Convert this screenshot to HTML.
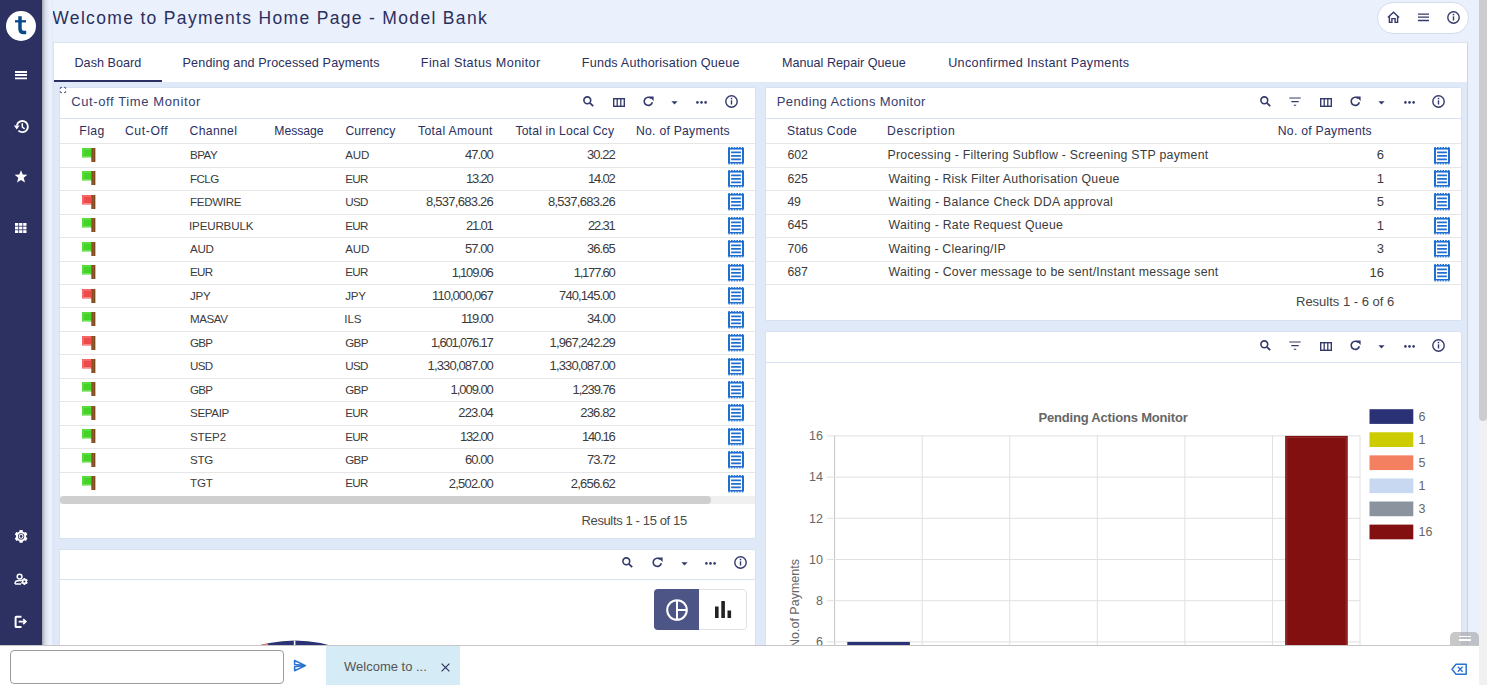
<!DOCTYPE html><html><head><meta charset="utf-8"><style>
*{box-sizing:border-box;margin:0;padding:0}
html,body{width:1487px;height:685px;overflow:hidden;background:#eaf1fc;font-family:"Liberation Sans",sans-serif;color:#333}
div{position:absolute;white-space:nowrap}
svg{position:absolute;overflow:visible}
.p{background:#fff;border:1px solid #d6e1f4;border-radius:2px}
.t{font-size:13px;line-height:15px}
.nv{color:#2b2f5e}
.dk{color:#3b3b3b}
.rl{height:1px;background:#e6e6e6}
</style></head><body><div style="left:1479px;top:0;width:8px;height:685px;background:#f1f1f1"></div><div style="left:1479px;top:0;width:8px;height:421px;background:#cdcdcd;border-radius:0 0 4px 4px"></div><div class="t nv" style="left:52.30px;top:10.64px;font-size:17.5px;letter-spacing:1.328px;">Welcome to Payments Home Page - Model Bank</div><div style="left:1377px;top:2px;width:92px;height:32px;border:1px solid #d3ddef;border-radius:16px;background:#fff"></div><svg style="left:1387px;top:11px" width="13" height="13" viewBox="0 0 13 13"><path d="M0.9 6.6 L6.5 1.3 L12.1 6.6" fill="none" stroke="#343a6b" stroke-width="1.4"/><path d="M2.4 5.3 V11.4 H4.9 V7.6 H8.1 V11.4 H10.6 V5.3" fill="none" stroke="#343a6b" stroke-width="1.4"/></svg><svg style="left:1417px;top:13px" width="13" height="9" viewBox="0 0 13 9"><path d="M1 1.1H12M1 4.1H12M1 7.5H12" stroke="#343a6b" stroke-width="1.4"/></svg><svg style="left:1447px;top:11px" width="13" height="13" viewBox="0 0 13 13"><circle cx="6.5" cy="6.5" r="5.7" fill="none" stroke="#343a6b" stroke-width="1.4"/><rect x="5.8" y="5.3" width="1.4" height="4.2" fill="#343a6b"/><rect x="5.75" y="2.8" width="1.5" height="1.5" fill="#343a6b"/></svg><div style="left:54px;top:42px;width:1414px;height:603px;background:#dfe9f8;border-top:1px solid #dce4f1;border-right:1px solid #cbd3e8"></div><div style="left:54px;top:43px;width:1413px;height:39px;background:#fff"></div><div class="t nv" style="left:74.50px;top:56.43px;font-size:12.6px;letter-spacing:0.022px;">Dash Board</div><div class="t nv" style="left:182.60px;top:56.43px;font-size:12.6px;letter-spacing:0.127px;">Pending and Processed Payments</div><div class="t nv" style="left:420.80px;top:56.43px;font-size:12.6px;letter-spacing:0.390px;">Final Status Monitor</div><div class="t nv" style="left:581.80px;top:56.43px;font-size:12.6px;letter-spacing:0.212px;">Funds Authorisation Queue</div><div class="t nv" style="left:781.90px;top:56.43px;font-size:12.6px;letter-spacing:0.033px;">Manual Repair Queue</div><div class="t nv" style="left:948.20px;top:56.43px;font-size:12.6px;letter-spacing:0.322px;">Unconfirmed Instant Payments</div><div style="left:54px;top:80px;width:108px;height:2px;background:#2b2f62"></div><div class="p" style="left:59px;top:87px;width:697px;height:452px"></div><svg style="left:60.2px;top:87.3px" width="6" height="6" viewBox="0 0 6 6"><path d="M0.4 2V0.4H2M4 0.4H5.6V2M5.6 4V5.6H4M2 5.6H0.4V4" fill="none" stroke="#3a4080" stroke-width="0.8"/></svg><div class="t" style="left:71.30px;top:93.90px;font-size:13px;letter-spacing:0.604px;color:#36406f">Cut-off Time Monitor</div><div style="left:60px;top:118px;width:695px;height:1px;background:#d8e2f4"></div><svg style="left:583px;top:96px" width="11" height="11" viewBox="0 0 11 11"><circle cx="4.3" cy="4.3" r="3.4" fill="none" stroke="#343a6b" stroke-width="1.6"/><path d="M6.8 6.8 L10.2 10.2" stroke="#343a6b" stroke-width="1.8"/></svg><svg style="left:613px;top:98px" width="12" height="9" viewBox="0 0 12 9"><rect x="0.7" y="0.7" width="10.6" height="7.6" fill="none" stroke="#343a6b" stroke-width="1.4"/><path d="M4.2 0.7V8.3M7.8 0.7V8.3" stroke="#343a6b" stroke-width="1.3"/></svg><svg style="left:643px;top:96px" width="11" height="11" viewBox="0 0 11 11"><path d="M9.3 6.2 A4.1 4.1 0 1 1 8.2 2.4" fill="none" stroke="#343a6b" stroke-width="1.6"/><path d="M6.2 0.6 L10.6 0.6 L10.6 5 Z" fill="#343a6b"/></svg><svg style="left:671px;top:101px" width="7" height="4" viewBox="0 0 7 4"><path d="M0.4 0.2H6.6L3.5 3.6Z" fill="#343a6b"/></svg><svg style="left:696px;top:101px" width="11" height="3" viewBox="0 0 11 3"><circle cx="1.4" cy="1.4" r="1.3" fill="#343a6b"/><circle cx="5.5" cy="1.4" r="1.3" fill="#343a6b"/><circle cx="9.6" cy="1.4" r="1.3" fill="#343a6b"/></svg><svg style="left:725px;top:95px" width="13" height="13" viewBox="0 0 13 13"><circle cx="6.5" cy="6.5" r="5.7" fill="none" stroke="#343a6b" stroke-width="1.4"/><rect x="5.8" y="5.3" width="1.4" height="4.2" fill="#343a6b"/><rect x="5.75" y="2.8" width="1.5" height="1.5" fill="#343a6b"/></svg><div class="t nv" style="left:79.30px;top:124.37px;font-size:12.2px;letter-spacing:0.457px;">Flag</div><div class="t nv" style="left:124.90px;top:124.37px;font-size:12.2px;letter-spacing:0.622px;">Cut-Off</div><div class="t nv" style="left:189.60px;top:124.37px;font-size:12.2px;letter-spacing:0.318px;">Channel</div><div class="t nv" style="left:274.30px;top:124.37px;font-size:12.2px;letter-spacing:-0.029px;">Message</div><div class="t nv" style="left:345.50px;top:124.37px;font-size:12.2px;letter-spacing:0.050px;">Currency</div><div class="t nv" style="left:418.00px;top:124.37px;font-size:12.2px;letter-spacing:0.360px;">Total Amount</div><div class="t nv" style="left:515.40px;top:124.37px;font-size:12.2px;letter-spacing:0.181px;">Total in Local Ccy</div><div class="t nv" style="left:636.00px;top:124.37px;font-size:12.2px;letter-spacing:0.257px;">No. of Payments</div><div class="rl" style="left:60px;top:143.30px;width:695px"></div><div class="t dk" style="left:190.00px;top:147.18px;font-size:11.6px;letter-spacing:-0.500px;">BPAY</div><div class="t dk" style="left:345.30px;top:147.18px;font-size:11.6px;letter-spacing:-0.255px;">AUD</div><div class="t dk" style="left:465.00px;top:147.30px;letter-spacing:-0.925px">47.00</div><div class="t dk" style="left:587.00px;top:147.30px;letter-spacing:-0.925px">30.22</div><svg style="left:81.8px;top:147.9px" width="14" height="15" viewBox="0 0 14 15"><rect x="0" y="0" width="10.5" height="9.5" fill="#45d329"/><rect x="1" y="1" width="8.5" height="7.5" fill="none" stroke="#86ec6c" stroke-width="0.8" opacity="0.8"/><rect x="9.6" y="0" width="3.6" height="14" fill="#9a5a28"/><rect x="9.6" y="0" width="0.8" height="14" fill="#6d3c17"/><rect x="12.4" y="0" width="0.8" height="14" fill="#6d3c17"/></svg><svg style="left:728px;top:146.5px" width="16" height="17.4" viewBox="0 0 16 17.4"><rect x="0" y="1" width="16" height="15.4" fill="#1f6fd1"/><rect x="2" y="2.6" width="12" height="12.4" fill="#fff"/><path d="M3.1 5.4H12.9M3.1 8.8H12.9M3.1 12.4H12.9" stroke="#1f6fd1" stroke-width="1.7"/><rect x="0.3" y="0" width="1.6" height="1.2" fill="#1f6fd1"/><rect x="3.0" y="0" width="1.6" height="1.2" fill="#1f6fd1"/><rect x="5.7" y="0" width="1.6" height="1.2" fill="#1f6fd1"/><rect x="8.400000000000002" y="0" width="1.6" height="1.2" fill="#1f6fd1"/><rect x="11.100000000000001" y="0" width="1.6" height="1.2" fill="#1f6fd1"/><rect x="13.8" y="0" width="1.6" height="1.2" fill="#1f6fd1"/><rect x="0.3" y="16.2" width="1.6" height="1.2" fill="#1f6fd1"/><rect x="3.0" y="16.2" width="1.6" height="1.2" fill="#1f6fd1"/><rect x="5.7" y="16.2" width="1.6" height="1.2" fill="#1f6fd1"/><rect x="8.400000000000002" y="16.2" width="1.6" height="1.2" fill="#1f6fd1"/><rect x="11.100000000000001" y="16.2" width="1.6" height="1.2" fill="#1f6fd1"/><rect x="13.8" y="16.2" width="1.6" height="1.2" fill="#1f6fd1"/></svg><div class="rl" style="left:60px;top:166.75px;width:695px"></div><div class="t dk" style="left:190.00px;top:170.63px;font-size:11.6px;letter-spacing:-0.546px;">FCLG</div><div class="t dk" style="left:345.30px;top:170.63px;font-size:11.6px;letter-spacing:-0.691px;">EUR</div><div class="t dk" style="left:466.10px;top:170.75px;letter-spacing:-1.200px">13.20</div><div class="t dk" style="left:588.10px;top:170.75px;letter-spacing:-1.200px">14.02</div><svg style="left:81.8px;top:171.35px" width="14" height="15" viewBox="0 0 14 15"><rect x="0" y="0" width="10.5" height="9.5" fill="#45d329"/><rect x="1" y="1" width="8.5" height="7.5" fill="none" stroke="#86ec6c" stroke-width="0.8" opacity="0.8"/><rect x="9.6" y="0" width="3.6" height="14" fill="#9a5a28"/><rect x="9.6" y="0" width="0.8" height="14" fill="#6d3c17"/><rect x="12.4" y="0" width="0.8" height="14" fill="#6d3c17"/></svg><svg style="left:728px;top:169.95px" width="16" height="17.4" viewBox="0 0 16 17.4"><rect x="0" y="1" width="16" height="15.4" fill="#1f6fd1"/><rect x="2" y="2.6" width="12" height="12.4" fill="#fff"/><path d="M3.1 5.4H12.9M3.1 8.8H12.9M3.1 12.4H12.9" stroke="#1f6fd1" stroke-width="1.7"/><rect x="0.3" y="0" width="1.6" height="1.2" fill="#1f6fd1"/><rect x="3.0" y="0" width="1.6" height="1.2" fill="#1f6fd1"/><rect x="5.7" y="0" width="1.6" height="1.2" fill="#1f6fd1"/><rect x="8.400000000000002" y="0" width="1.6" height="1.2" fill="#1f6fd1"/><rect x="11.100000000000001" y="0" width="1.6" height="1.2" fill="#1f6fd1"/><rect x="13.8" y="0" width="1.6" height="1.2" fill="#1f6fd1"/><rect x="0.3" y="16.2" width="1.6" height="1.2" fill="#1f6fd1"/><rect x="3.0" y="16.2" width="1.6" height="1.2" fill="#1f6fd1"/><rect x="5.7" y="16.2" width="1.6" height="1.2" fill="#1f6fd1"/><rect x="8.400000000000002" y="16.2" width="1.6" height="1.2" fill="#1f6fd1"/><rect x="11.100000000000001" y="16.2" width="1.6" height="1.2" fill="#1f6fd1"/><rect x="13.8" y="16.2" width="1.6" height="1.2" fill="#1f6fd1"/></svg><div class="rl" style="left:60px;top:190.20px;width:695px"></div><div class="t dk" style="left:190.00px;top:194.08px;font-size:11.6px;letter-spacing:-0.340px;">FEDWIRE</div><div class="t dk" style="left:345.30px;top:194.08px;font-size:11.6px;letter-spacing:-0.691px;">USD</div><div class="t dk" style="left:425.90px;top:194.20px;letter-spacing:-0.725px">8,537,683.26</div><div class="t dk" style="left:547.90px;top:194.20px;letter-spacing:-0.725px">8,537,683.26</div><svg style="left:81.8px;top:194.8px" width="14" height="15" viewBox="0 0 14 15"><rect x="0" y="0" width="10.5" height="9.5" fill="#ee4a4a"/><rect x="1" y="1" width="8.5" height="7.5" fill="none" stroke="#ffa5a5" stroke-width="0.8" opacity="0.8"/><rect x="9.6" y="0" width="3.6" height="14" fill="#9a5a28"/><rect x="9.6" y="0" width="0.8" height="14" fill="#6d3c17"/><rect x="12.4" y="0" width="0.8" height="14" fill="#6d3c17"/></svg><svg style="left:728px;top:193.4px" width="16" height="17.4" viewBox="0 0 16 17.4"><rect x="0" y="1" width="16" height="15.4" fill="#1f6fd1"/><rect x="2" y="2.6" width="12" height="12.4" fill="#fff"/><path d="M3.1 5.4H12.9M3.1 8.8H12.9M3.1 12.4H12.9" stroke="#1f6fd1" stroke-width="1.7"/><rect x="0.3" y="0" width="1.6" height="1.2" fill="#1f6fd1"/><rect x="3.0" y="0" width="1.6" height="1.2" fill="#1f6fd1"/><rect x="5.7" y="0" width="1.6" height="1.2" fill="#1f6fd1"/><rect x="8.400000000000002" y="0" width="1.6" height="1.2" fill="#1f6fd1"/><rect x="11.100000000000001" y="0" width="1.6" height="1.2" fill="#1f6fd1"/><rect x="13.8" y="0" width="1.6" height="1.2" fill="#1f6fd1"/><rect x="0.3" y="16.2" width="1.6" height="1.2" fill="#1f6fd1"/><rect x="3.0" y="16.2" width="1.6" height="1.2" fill="#1f6fd1"/><rect x="5.7" y="16.2" width="1.6" height="1.2" fill="#1f6fd1"/><rect x="8.400000000000002" y="16.2" width="1.6" height="1.2" fill="#1f6fd1"/><rect x="11.100000000000001" y="16.2" width="1.6" height="1.2" fill="#1f6fd1"/><rect x="13.8" y="16.2" width="1.6" height="1.2" fill="#1f6fd1"/></svg><div class="rl" style="left:60px;top:213.65px;width:695px"></div><div class="t dk" style="left:189.00px;top:217.53px;font-size:11.6px;letter-spacing:-0.164px;">IPEURBULK</div><div class="t dk" style="left:345.30px;top:217.53px;font-size:11.6px;letter-spacing:-0.691px;">EUR</div><div class="t dk" style="left:466.10px;top:217.65px;letter-spacing:-1.200px">21.01</div><div class="t dk" style="left:588.10px;top:217.65px;letter-spacing:-1.200px">22.31</div><svg style="left:81.8px;top:218.25px" width="14" height="15" viewBox="0 0 14 15"><rect x="0" y="0" width="10.5" height="9.5" fill="#45d329"/><rect x="1" y="1" width="8.5" height="7.5" fill="none" stroke="#86ec6c" stroke-width="0.8" opacity="0.8"/><rect x="9.6" y="0" width="3.6" height="14" fill="#9a5a28"/><rect x="9.6" y="0" width="0.8" height="14" fill="#6d3c17"/><rect x="12.4" y="0" width="0.8" height="14" fill="#6d3c17"/></svg><svg style="left:728px;top:216.85px" width="16" height="17.4" viewBox="0 0 16 17.4"><rect x="0" y="1" width="16" height="15.4" fill="#1f6fd1"/><rect x="2" y="2.6" width="12" height="12.4" fill="#fff"/><path d="M3.1 5.4H12.9M3.1 8.8H12.9M3.1 12.4H12.9" stroke="#1f6fd1" stroke-width="1.7"/><rect x="0.3" y="0" width="1.6" height="1.2" fill="#1f6fd1"/><rect x="3.0" y="0" width="1.6" height="1.2" fill="#1f6fd1"/><rect x="5.7" y="0" width="1.6" height="1.2" fill="#1f6fd1"/><rect x="8.400000000000002" y="0" width="1.6" height="1.2" fill="#1f6fd1"/><rect x="11.100000000000001" y="0" width="1.6" height="1.2" fill="#1f6fd1"/><rect x="13.8" y="0" width="1.6" height="1.2" fill="#1f6fd1"/><rect x="0.3" y="16.2" width="1.6" height="1.2" fill="#1f6fd1"/><rect x="3.0" y="16.2" width="1.6" height="1.2" fill="#1f6fd1"/><rect x="5.7" y="16.2" width="1.6" height="1.2" fill="#1f6fd1"/><rect x="8.400000000000002" y="16.2" width="1.6" height="1.2" fill="#1f6fd1"/><rect x="11.100000000000001" y="16.2" width="1.6" height="1.2" fill="#1f6fd1"/><rect x="13.8" y="16.2" width="1.6" height="1.2" fill="#1f6fd1"/></svg><div class="rl" style="left:60px;top:237.10px;width:695px"></div><div class="t dk" style="left:190.00px;top:240.98px;font-size:11.6px;letter-spacing:-0.255px;">AUD</div><div class="t dk" style="left:345.30px;top:240.98px;font-size:11.6px;letter-spacing:-0.255px;">AUD</div><div class="t dk" style="left:465.00px;top:241.10px;letter-spacing:-0.925px">57.00</div><div class="t dk" style="left:587.00px;top:241.10px;letter-spacing:-0.925px">36.65</div><svg style="left:81.8px;top:241.7px" width="14" height="15" viewBox="0 0 14 15"><rect x="0" y="0" width="10.5" height="9.5" fill="#45d329"/><rect x="1" y="1" width="8.5" height="7.5" fill="none" stroke="#86ec6c" stroke-width="0.8" opacity="0.8"/><rect x="9.6" y="0" width="3.6" height="14" fill="#9a5a28"/><rect x="9.6" y="0" width="0.8" height="14" fill="#6d3c17"/><rect x="12.4" y="0" width="0.8" height="14" fill="#6d3c17"/></svg><svg style="left:728px;top:240.3px" width="16" height="17.4" viewBox="0 0 16 17.4"><rect x="0" y="1" width="16" height="15.4" fill="#1f6fd1"/><rect x="2" y="2.6" width="12" height="12.4" fill="#fff"/><path d="M3.1 5.4H12.9M3.1 8.8H12.9M3.1 12.4H12.9" stroke="#1f6fd1" stroke-width="1.7"/><rect x="0.3" y="0" width="1.6" height="1.2" fill="#1f6fd1"/><rect x="3.0" y="0" width="1.6" height="1.2" fill="#1f6fd1"/><rect x="5.7" y="0" width="1.6" height="1.2" fill="#1f6fd1"/><rect x="8.400000000000002" y="0" width="1.6" height="1.2" fill="#1f6fd1"/><rect x="11.100000000000001" y="0" width="1.6" height="1.2" fill="#1f6fd1"/><rect x="13.8" y="0" width="1.6" height="1.2" fill="#1f6fd1"/><rect x="0.3" y="16.2" width="1.6" height="1.2" fill="#1f6fd1"/><rect x="3.0" y="16.2" width="1.6" height="1.2" fill="#1f6fd1"/><rect x="5.7" y="16.2" width="1.6" height="1.2" fill="#1f6fd1"/><rect x="8.400000000000002" y="16.2" width="1.6" height="1.2" fill="#1f6fd1"/><rect x="11.100000000000001" y="16.2" width="1.6" height="1.2" fill="#1f6fd1"/><rect x="13.8" y="16.2" width="1.6" height="1.2" fill="#1f6fd1"/></svg><div class="rl" style="left:60px;top:260.55px;width:695px"></div><div class="t dk" style="left:190.00px;top:264.43px;font-size:11.6px;letter-spacing:-0.691px;">EUR</div><div class="t dk" style="left:345.30px;top:264.43px;font-size:11.6px;letter-spacing:-0.691px;">EUR</div><div class="t dk" style="left:451.63px;top:264.55px;letter-spacing:-1.200px">1,109.06</div><div class="t dk" style="left:573.63px;top:264.55px;letter-spacing:-1.200px">1,177.60</div><svg style="left:81.8px;top:265.15px" width="14" height="15" viewBox="0 0 14 15"><rect x="0" y="0" width="10.5" height="9.5" fill="#45d329"/><rect x="1" y="1" width="8.5" height="7.5" fill="none" stroke="#86ec6c" stroke-width="0.8" opacity="0.8"/><rect x="9.6" y="0" width="3.6" height="14" fill="#9a5a28"/><rect x="9.6" y="0" width="0.8" height="14" fill="#6d3c17"/><rect x="12.4" y="0" width="0.8" height="14" fill="#6d3c17"/></svg><svg style="left:728px;top:263.75px" width="16" height="17.4" viewBox="0 0 16 17.4"><rect x="0" y="1" width="16" height="15.4" fill="#1f6fd1"/><rect x="2" y="2.6" width="12" height="12.4" fill="#fff"/><path d="M3.1 5.4H12.9M3.1 8.8H12.9M3.1 12.4H12.9" stroke="#1f6fd1" stroke-width="1.7"/><rect x="0.3" y="0" width="1.6" height="1.2" fill="#1f6fd1"/><rect x="3.0" y="0" width="1.6" height="1.2" fill="#1f6fd1"/><rect x="5.7" y="0" width="1.6" height="1.2" fill="#1f6fd1"/><rect x="8.400000000000002" y="0" width="1.6" height="1.2" fill="#1f6fd1"/><rect x="11.100000000000001" y="0" width="1.6" height="1.2" fill="#1f6fd1"/><rect x="13.8" y="0" width="1.6" height="1.2" fill="#1f6fd1"/><rect x="0.3" y="16.2" width="1.6" height="1.2" fill="#1f6fd1"/><rect x="3.0" y="16.2" width="1.6" height="1.2" fill="#1f6fd1"/><rect x="5.7" y="16.2" width="1.6" height="1.2" fill="#1f6fd1"/><rect x="8.400000000000002" y="16.2" width="1.6" height="1.2" fill="#1f6fd1"/><rect x="11.100000000000001" y="16.2" width="1.6" height="1.2" fill="#1f6fd1"/><rect x="13.8" y="16.2" width="1.6" height="1.2" fill="#1f6fd1"/></svg><div class="rl" style="left:60px;top:284.00px;width:695px"></div><div class="t dk" style="left:190.00px;top:287.88px;font-size:11.6px;letter-spacing:-0.226px;">JPY</div><div class="t dk" style="left:345.30px;top:287.88px;font-size:11.6px;letter-spacing:-0.226px;">JPY</div><div class="t dk" style="left:432.10px;top:288.00px;letter-spacing:-0.960px">110,000,067</div><div class="t dk" style="left:559.10px;top:288.00px;letter-spacing:-0.926px">740,145.00</div><svg style="left:81.8px;top:288.6px" width="14" height="15" viewBox="0 0 14 15"><rect x="0" y="0" width="10.5" height="9.5" fill="#ee4a4a"/><rect x="1" y="1" width="8.5" height="7.5" fill="none" stroke="#ffa5a5" stroke-width="0.8" opacity="0.8"/><rect x="9.6" y="0" width="3.6" height="14" fill="#9a5a28"/><rect x="9.6" y="0" width="0.8" height="14" fill="#6d3c17"/><rect x="12.4" y="0" width="0.8" height="14" fill="#6d3c17"/></svg><svg style="left:728px;top:287.2px" width="16" height="17.4" viewBox="0 0 16 17.4"><rect x="0" y="1" width="16" height="15.4" fill="#1f6fd1"/><rect x="2" y="2.6" width="12" height="12.4" fill="#fff"/><path d="M3.1 5.4H12.9M3.1 8.8H12.9M3.1 12.4H12.9" stroke="#1f6fd1" stroke-width="1.7"/><rect x="0.3" y="0" width="1.6" height="1.2" fill="#1f6fd1"/><rect x="3.0" y="0" width="1.6" height="1.2" fill="#1f6fd1"/><rect x="5.7" y="0" width="1.6" height="1.2" fill="#1f6fd1"/><rect x="8.400000000000002" y="0" width="1.6" height="1.2" fill="#1f6fd1"/><rect x="11.100000000000001" y="0" width="1.6" height="1.2" fill="#1f6fd1"/><rect x="13.8" y="0" width="1.6" height="1.2" fill="#1f6fd1"/><rect x="0.3" y="16.2" width="1.6" height="1.2" fill="#1f6fd1"/><rect x="3.0" y="16.2" width="1.6" height="1.2" fill="#1f6fd1"/><rect x="5.7" y="16.2" width="1.6" height="1.2" fill="#1f6fd1"/><rect x="8.400000000000002" y="16.2" width="1.6" height="1.2" fill="#1f6fd1"/><rect x="11.100000000000001" y="16.2" width="1.6" height="1.2" fill="#1f6fd1"/><rect x="13.8" y="16.2" width="1.6" height="1.2" fill="#1f6fd1"/></svg><div class="rl" style="left:60px;top:307.45px;width:695px"></div><div class="t dk" style="left:190.00px;top:311.33px;font-size:11.6px;letter-spacing:-0.434px;">MASAV</div><div class="t dk" style="left:344.30px;top:311.33px;font-size:11.6px;letter-spacing:-0.119px;">ILS</div><div class="t dk" style="left:461.03px;top:311.45px;letter-spacing:-1.200px">119.00</div><div class="t dk" style="left:587.00px;top:311.45px;letter-spacing:-0.925px">34.00</div><svg style="left:81.8px;top:312.05px" width="14" height="15" viewBox="0 0 14 15"><rect x="0" y="0" width="10.5" height="9.5" fill="#45d329"/><rect x="1" y="1" width="8.5" height="7.5" fill="none" stroke="#86ec6c" stroke-width="0.8" opacity="0.8"/><rect x="9.6" y="0" width="3.6" height="14" fill="#9a5a28"/><rect x="9.6" y="0" width="0.8" height="14" fill="#6d3c17"/><rect x="12.4" y="0" width="0.8" height="14" fill="#6d3c17"/></svg><svg style="left:728px;top:310.65px" width="16" height="17.4" viewBox="0 0 16 17.4"><rect x="0" y="1" width="16" height="15.4" fill="#1f6fd1"/><rect x="2" y="2.6" width="12" height="12.4" fill="#fff"/><path d="M3.1 5.4H12.9M3.1 8.8H12.9M3.1 12.4H12.9" stroke="#1f6fd1" stroke-width="1.7"/><rect x="0.3" y="0" width="1.6" height="1.2" fill="#1f6fd1"/><rect x="3.0" y="0" width="1.6" height="1.2" fill="#1f6fd1"/><rect x="5.7" y="0" width="1.6" height="1.2" fill="#1f6fd1"/><rect x="8.400000000000002" y="0" width="1.6" height="1.2" fill="#1f6fd1"/><rect x="11.100000000000001" y="0" width="1.6" height="1.2" fill="#1f6fd1"/><rect x="13.8" y="0" width="1.6" height="1.2" fill="#1f6fd1"/><rect x="0.3" y="16.2" width="1.6" height="1.2" fill="#1f6fd1"/><rect x="3.0" y="16.2" width="1.6" height="1.2" fill="#1f6fd1"/><rect x="5.7" y="16.2" width="1.6" height="1.2" fill="#1f6fd1"/><rect x="8.400000000000002" y="16.2" width="1.6" height="1.2" fill="#1f6fd1"/><rect x="11.100000000000001" y="16.2" width="1.6" height="1.2" fill="#1f6fd1"/><rect x="13.8" y="16.2" width="1.6" height="1.2" fill="#1f6fd1"/></svg><div class="rl" style="left:60px;top:330.90px;width:695px"></div><div class="t dk" style="left:190.00px;top:334.78px;font-size:11.6px;letter-spacing:-0.698px;">GBP</div><div class="t dk" style="left:345.30px;top:334.78px;font-size:11.6px;letter-spacing:-0.698px;">GBP</div><div class="t dk" style="left:431.00px;top:334.90px;letter-spacing:-1.189px">1,601,076.17</div><div class="t dk" style="left:549.60px;top:334.90px;letter-spacing:-0.880px">1,967,242.29</div><svg style="left:81.8px;top:335.5px" width="14" height="15" viewBox="0 0 14 15"><rect x="0" y="0" width="10.5" height="9.5" fill="#ee4a4a"/><rect x="1" y="1" width="8.5" height="7.5" fill="none" stroke="#ffa5a5" stroke-width="0.8" opacity="0.8"/><rect x="9.6" y="0" width="3.6" height="14" fill="#9a5a28"/><rect x="9.6" y="0" width="0.8" height="14" fill="#6d3c17"/><rect x="12.4" y="0" width="0.8" height="14" fill="#6d3c17"/></svg><svg style="left:728px;top:334.1px" width="16" height="17.4" viewBox="0 0 16 17.4"><rect x="0" y="1" width="16" height="15.4" fill="#1f6fd1"/><rect x="2" y="2.6" width="12" height="12.4" fill="#fff"/><path d="M3.1 5.4H12.9M3.1 8.8H12.9M3.1 12.4H12.9" stroke="#1f6fd1" stroke-width="1.7"/><rect x="0.3" y="0" width="1.6" height="1.2" fill="#1f6fd1"/><rect x="3.0" y="0" width="1.6" height="1.2" fill="#1f6fd1"/><rect x="5.7" y="0" width="1.6" height="1.2" fill="#1f6fd1"/><rect x="8.400000000000002" y="0" width="1.6" height="1.2" fill="#1f6fd1"/><rect x="11.100000000000001" y="0" width="1.6" height="1.2" fill="#1f6fd1"/><rect x="13.8" y="0" width="1.6" height="1.2" fill="#1f6fd1"/><rect x="0.3" y="16.2" width="1.6" height="1.2" fill="#1f6fd1"/><rect x="3.0" y="16.2" width="1.6" height="1.2" fill="#1f6fd1"/><rect x="5.7" y="16.2" width="1.6" height="1.2" fill="#1f6fd1"/><rect x="8.400000000000002" y="16.2" width="1.6" height="1.2" fill="#1f6fd1"/><rect x="11.100000000000001" y="16.2" width="1.6" height="1.2" fill="#1f6fd1"/><rect x="13.8" y="16.2" width="1.6" height="1.2" fill="#1f6fd1"/></svg><div class="rl" style="left:60px;top:354.35px;width:695px"></div><div class="t dk" style="left:190.00px;top:358.23px;font-size:11.6px;letter-spacing:-0.691px;">USD</div><div class="t dk" style="left:345.30px;top:358.23px;font-size:11.6px;letter-spacing:-0.691px;">USD</div><div class="t dk" style="left:427.60px;top:358.35px;letter-spacing:-0.880px">1,330,087.00</div><div class="t dk" style="left:549.60px;top:358.35px;letter-spacing:-0.880px">1,330,087.00</div><svg style="left:81.8px;top:358.95px" width="14" height="15" viewBox="0 0 14 15"><rect x="0" y="0" width="10.5" height="9.5" fill="#ee4a4a"/><rect x="1" y="1" width="8.5" height="7.5" fill="none" stroke="#ffa5a5" stroke-width="0.8" opacity="0.8"/><rect x="9.6" y="0" width="3.6" height="14" fill="#9a5a28"/><rect x="9.6" y="0" width="0.8" height="14" fill="#6d3c17"/><rect x="12.4" y="0" width="0.8" height="14" fill="#6d3c17"/></svg><svg style="left:728px;top:357.55px" width="16" height="17.4" viewBox="0 0 16 17.4"><rect x="0" y="1" width="16" height="15.4" fill="#1f6fd1"/><rect x="2" y="2.6" width="12" height="12.4" fill="#fff"/><path d="M3.1 5.4H12.9M3.1 8.8H12.9M3.1 12.4H12.9" stroke="#1f6fd1" stroke-width="1.7"/><rect x="0.3" y="0" width="1.6" height="1.2" fill="#1f6fd1"/><rect x="3.0" y="0" width="1.6" height="1.2" fill="#1f6fd1"/><rect x="5.7" y="0" width="1.6" height="1.2" fill="#1f6fd1"/><rect x="8.400000000000002" y="0" width="1.6" height="1.2" fill="#1f6fd1"/><rect x="11.100000000000001" y="0" width="1.6" height="1.2" fill="#1f6fd1"/><rect x="13.8" y="0" width="1.6" height="1.2" fill="#1f6fd1"/><rect x="0.3" y="16.2" width="1.6" height="1.2" fill="#1f6fd1"/><rect x="3.0" y="16.2" width="1.6" height="1.2" fill="#1f6fd1"/><rect x="5.7" y="16.2" width="1.6" height="1.2" fill="#1f6fd1"/><rect x="8.400000000000002" y="16.2" width="1.6" height="1.2" fill="#1f6fd1"/><rect x="11.100000000000001" y="16.2" width="1.6" height="1.2" fill="#1f6fd1"/><rect x="13.8" y="16.2" width="1.6" height="1.2" fill="#1f6fd1"/></svg><div class="rl" style="left:60px;top:377.80px;width:695px"></div><div class="t dk" style="left:190.00px;top:381.68px;font-size:11.6px;letter-spacing:-0.698px;">GBP</div><div class="t dk" style="left:345.30px;top:381.68px;font-size:11.6px;letter-spacing:-0.698px;">GBP</div><div class="t dk" style="left:450.50px;top:381.80px;letter-spacing:-1.039px">1,009.00</div><div class="t dk" style="left:572.50px;top:381.80px;letter-spacing:-1.039px">1,239.76</div><svg style="left:81.8px;top:382.4px" width="14" height="15" viewBox="0 0 14 15"><rect x="0" y="0" width="10.5" height="9.5" fill="#45d329"/><rect x="1" y="1" width="8.5" height="7.5" fill="none" stroke="#86ec6c" stroke-width="0.8" opacity="0.8"/><rect x="9.6" y="0" width="3.6" height="14" fill="#9a5a28"/><rect x="9.6" y="0" width="0.8" height="14" fill="#6d3c17"/><rect x="12.4" y="0" width="0.8" height="14" fill="#6d3c17"/></svg><svg style="left:728px;top:381.0px" width="16" height="17.4" viewBox="0 0 16 17.4"><rect x="0" y="1" width="16" height="15.4" fill="#1f6fd1"/><rect x="2" y="2.6" width="12" height="12.4" fill="#fff"/><path d="M3.1 5.4H12.9M3.1 8.8H12.9M3.1 12.4H12.9" stroke="#1f6fd1" stroke-width="1.7"/><rect x="0.3" y="0" width="1.6" height="1.2" fill="#1f6fd1"/><rect x="3.0" y="0" width="1.6" height="1.2" fill="#1f6fd1"/><rect x="5.7" y="0" width="1.6" height="1.2" fill="#1f6fd1"/><rect x="8.400000000000002" y="0" width="1.6" height="1.2" fill="#1f6fd1"/><rect x="11.100000000000001" y="0" width="1.6" height="1.2" fill="#1f6fd1"/><rect x="13.8" y="0" width="1.6" height="1.2" fill="#1f6fd1"/><rect x="0.3" y="16.2" width="1.6" height="1.2" fill="#1f6fd1"/><rect x="3.0" y="16.2" width="1.6" height="1.2" fill="#1f6fd1"/><rect x="5.7" y="16.2" width="1.6" height="1.2" fill="#1f6fd1"/><rect x="8.400000000000002" y="16.2" width="1.6" height="1.2" fill="#1f6fd1"/><rect x="11.100000000000001" y="16.2" width="1.6" height="1.2" fill="#1f6fd1"/><rect x="13.8" y="16.2" width="1.6" height="1.2" fill="#1f6fd1"/></svg><div class="rl" style="left:60px;top:401.25px;width:695px"></div><div class="t dk" style="left:190.00px;top:405.13px;font-size:11.6px;letter-spacing:-0.353px;">SEPAIP</div><div class="t dk" style="left:345.30px;top:405.13px;font-size:11.6px;letter-spacing:-0.691px;">EUR</div><div class="t dk" style="left:458.30px;top:405.25px;letter-spacing:-0.846px">223.04</div><div class="t dk" style="left:580.30px;top:405.25px;letter-spacing:-0.846px">236.82</div><svg style="left:81.8px;top:405.85px" width="14" height="15" viewBox="0 0 14 15"><rect x="0" y="0" width="10.5" height="9.5" fill="#45d329"/><rect x="1" y="1" width="8.5" height="7.5" fill="none" stroke="#86ec6c" stroke-width="0.8" opacity="0.8"/><rect x="9.6" y="0" width="3.6" height="14" fill="#9a5a28"/><rect x="9.6" y="0" width="0.8" height="14" fill="#6d3c17"/><rect x="12.4" y="0" width="0.8" height="14" fill="#6d3c17"/></svg><svg style="left:728px;top:404.45px" width="16" height="17.4" viewBox="0 0 16 17.4"><rect x="0" y="1" width="16" height="15.4" fill="#1f6fd1"/><rect x="2" y="2.6" width="12" height="12.4" fill="#fff"/><path d="M3.1 5.4H12.9M3.1 8.8H12.9M3.1 12.4H12.9" stroke="#1f6fd1" stroke-width="1.7"/><rect x="0.3" y="0" width="1.6" height="1.2" fill="#1f6fd1"/><rect x="3.0" y="0" width="1.6" height="1.2" fill="#1f6fd1"/><rect x="5.7" y="0" width="1.6" height="1.2" fill="#1f6fd1"/><rect x="8.400000000000002" y="0" width="1.6" height="1.2" fill="#1f6fd1"/><rect x="11.100000000000001" y="0" width="1.6" height="1.2" fill="#1f6fd1"/><rect x="13.8" y="0" width="1.6" height="1.2" fill="#1f6fd1"/><rect x="0.3" y="16.2" width="1.6" height="1.2" fill="#1f6fd1"/><rect x="3.0" y="16.2" width="1.6" height="1.2" fill="#1f6fd1"/><rect x="5.7" y="16.2" width="1.6" height="1.2" fill="#1f6fd1"/><rect x="8.400000000000002" y="16.2" width="1.6" height="1.2" fill="#1f6fd1"/><rect x="11.100000000000001" y="16.2" width="1.6" height="1.2" fill="#1f6fd1"/><rect x="13.8" y="16.2" width="1.6" height="1.2" fill="#1f6fd1"/></svg><div class="rl" style="left:60px;top:424.70px;width:695px"></div><div class="t dk" style="left:190.00px;top:428.58px;font-size:11.6px;letter-spacing:-0.142px;">STEP2</div><div class="t dk" style="left:345.30px;top:428.58px;font-size:11.6px;letter-spacing:-0.691px;">EUR</div><div class="t dk" style="left:460.00px;top:428.70px;letter-spacing:-1.186px">132.00</div><div class="t dk" style="left:582.07px;top:428.70px;letter-spacing:-1.200px">140.16</div><svg style="left:81.8px;top:429.3px" width="14" height="15" viewBox="0 0 14 15"><rect x="0" y="0" width="10.5" height="9.5" fill="#45d329"/><rect x="1" y="1" width="8.5" height="7.5" fill="none" stroke="#86ec6c" stroke-width="0.8" opacity="0.8"/><rect x="9.6" y="0" width="3.6" height="14" fill="#9a5a28"/><rect x="9.6" y="0" width="0.8" height="14" fill="#6d3c17"/><rect x="12.4" y="0" width="0.8" height="14" fill="#6d3c17"/></svg><svg style="left:728px;top:427.9px" width="16" height="17.4" viewBox="0 0 16 17.4"><rect x="0" y="1" width="16" height="15.4" fill="#1f6fd1"/><rect x="2" y="2.6" width="12" height="12.4" fill="#fff"/><path d="M3.1 5.4H12.9M3.1 8.8H12.9M3.1 12.4H12.9" stroke="#1f6fd1" stroke-width="1.7"/><rect x="0.3" y="0" width="1.6" height="1.2" fill="#1f6fd1"/><rect x="3.0" y="0" width="1.6" height="1.2" fill="#1f6fd1"/><rect x="5.7" y="0" width="1.6" height="1.2" fill="#1f6fd1"/><rect x="8.400000000000002" y="0" width="1.6" height="1.2" fill="#1f6fd1"/><rect x="11.100000000000001" y="0" width="1.6" height="1.2" fill="#1f6fd1"/><rect x="13.8" y="0" width="1.6" height="1.2" fill="#1f6fd1"/><rect x="0.3" y="16.2" width="1.6" height="1.2" fill="#1f6fd1"/><rect x="3.0" y="16.2" width="1.6" height="1.2" fill="#1f6fd1"/><rect x="5.7" y="16.2" width="1.6" height="1.2" fill="#1f6fd1"/><rect x="8.400000000000002" y="16.2" width="1.6" height="1.2" fill="#1f6fd1"/><rect x="11.100000000000001" y="16.2" width="1.6" height="1.2" fill="#1f6fd1"/><rect x="13.8" y="16.2" width="1.6" height="1.2" fill="#1f6fd1"/></svg><div class="rl" style="left:60px;top:448.15px;width:695px"></div><div class="t dk" style="left:190.00px;top:452.03px;font-size:11.6px;letter-spacing:-0.305px;">STG</div><div class="t dk" style="left:345.30px;top:452.03px;font-size:11.6px;letter-spacing:-0.698px;">GBP</div><div class="t dk" style="left:465.00px;top:452.15px;letter-spacing:-0.925px">60.00</div><div class="t dk" style="left:587.00px;top:452.15px;letter-spacing:-0.925px">73.72</div><svg style="left:81.8px;top:452.75px" width="14" height="15" viewBox="0 0 14 15"><rect x="0" y="0" width="10.5" height="9.5" fill="#45d329"/><rect x="1" y="1" width="8.5" height="7.5" fill="none" stroke="#86ec6c" stroke-width="0.8" opacity="0.8"/><rect x="9.6" y="0" width="3.6" height="14" fill="#9a5a28"/><rect x="9.6" y="0" width="0.8" height="14" fill="#6d3c17"/><rect x="12.4" y="0" width="0.8" height="14" fill="#6d3c17"/></svg><svg style="left:728px;top:451.35px" width="16" height="17.4" viewBox="0 0 16 17.4"><rect x="0" y="1" width="16" height="15.4" fill="#1f6fd1"/><rect x="2" y="2.6" width="12" height="12.4" fill="#fff"/><path d="M3.1 5.4H12.9M3.1 8.8H12.9M3.1 12.4H12.9" stroke="#1f6fd1" stroke-width="1.7"/><rect x="0.3" y="0" width="1.6" height="1.2" fill="#1f6fd1"/><rect x="3.0" y="0" width="1.6" height="1.2" fill="#1f6fd1"/><rect x="5.7" y="0" width="1.6" height="1.2" fill="#1f6fd1"/><rect x="8.400000000000002" y="0" width="1.6" height="1.2" fill="#1f6fd1"/><rect x="11.100000000000001" y="0" width="1.6" height="1.2" fill="#1f6fd1"/><rect x="13.8" y="0" width="1.6" height="1.2" fill="#1f6fd1"/><rect x="0.3" y="16.2" width="1.6" height="1.2" fill="#1f6fd1"/><rect x="3.0" y="16.2" width="1.6" height="1.2" fill="#1f6fd1"/><rect x="5.7" y="16.2" width="1.6" height="1.2" fill="#1f6fd1"/><rect x="8.400000000000002" y="16.2" width="1.6" height="1.2" fill="#1f6fd1"/><rect x="11.100000000000001" y="16.2" width="1.6" height="1.2" fill="#1f6fd1"/><rect x="13.8" y="16.2" width="1.6" height="1.2" fill="#1f6fd1"/></svg><div class="rl" style="left:60px;top:471.60px;width:695px"></div><div class="t dk" style="left:190.00px;top:475.48px;font-size:11.6px;letter-spacing:-0.191px;">TGT</div><div class="t dk" style="left:345.30px;top:475.48px;font-size:11.6px;letter-spacing:-0.691px;">EUR</div><div class="t dk" style="left:448.80px;top:475.60px;letter-spacing:-0.796px">2,502.00</div><div class="t dk" style="left:570.80px;top:475.60px;letter-spacing:-0.796px">2,656.62</div><svg style="left:81.8px;top:476.2px" width="14" height="15" viewBox="0 0 14 15"><rect x="0" y="0" width="10.5" height="9.5" fill="#45d329"/><rect x="1" y="1" width="8.5" height="7.5" fill="none" stroke="#86ec6c" stroke-width="0.8" opacity="0.8"/><rect x="9.6" y="0" width="3.6" height="14" fill="#9a5a28"/><rect x="9.6" y="0" width="0.8" height="14" fill="#6d3c17"/><rect x="12.4" y="0" width="0.8" height="14" fill="#6d3c17"/></svg><svg style="left:728px;top:474.8px" width="16" height="17.4" viewBox="0 0 16 17.4"><rect x="0" y="1" width="16" height="15.4" fill="#1f6fd1"/><rect x="2" y="2.6" width="12" height="12.4" fill="#fff"/><path d="M3.1 5.4H12.9M3.1 8.8H12.9M3.1 12.4H12.9" stroke="#1f6fd1" stroke-width="1.7"/><rect x="0.3" y="0" width="1.6" height="1.2" fill="#1f6fd1"/><rect x="3.0" y="0" width="1.6" height="1.2" fill="#1f6fd1"/><rect x="5.7" y="0" width="1.6" height="1.2" fill="#1f6fd1"/><rect x="8.400000000000002" y="0" width="1.6" height="1.2" fill="#1f6fd1"/><rect x="11.100000000000001" y="0" width="1.6" height="1.2" fill="#1f6fd1"/><rect x="13.8" y="0" width="1.6" height="1.2" fill="#1f6fd1"/><rect x="0.3" y="16.2" width="1.6" height="1.2" fill="#1f6fd1"/><rect x="3.0" y="16.2" width="1.6" height="1.2" fill="#1f6fd1"/><rect x="5.7" y="16.2" width="1.6" height="1.2" fill="#1f6fd1"/><rect x="8.400000000000002" y="16.2" width="1.6" height="1.2" fill="#1f6fd1"/><rect x="11.100000000000001" y="16.2" width="1.6" height="1.2" fill="#1f6fd1"/><rect x="13.8" y="16.2" width="1.6" height="1.2" fill="#1f6fd1"/></svg><div style="left:60px;top:495.5px;width:695px;height:8px;background:#f0f0f0"></div><div style="left:60px;top:495.5px;width:651px;height:8px;background:#cfcfcf;border-radius:4px"></div><div class="t" style="left:581.5px;top:513.3px;color:#4a4a4a;letter-spacing:-0.37px">Results 1 - 15 of 15</div><div class="p" style="left:59px;top:549px;width:697px;height:120px"></div><div style="left:60px;top:579px;width:695px;height:1px;background:#d8e2f4"></div><svg style="left:622px;top:557px" width="11" height="11" viewBox="0 0 11 11"><circle cx="4.3" cy="4.3" r="3.4" fill="none" stroke="#343a6b" stroke-width="1.6"/><path d="M6.8 6.8 L10.2 10.2" stroke="#343a6b" stroke-width="1.8"/></svg><svg style="left:652px;top:557px" width="11" height="11" viewBox="0 0 11 11"><path d="M9.3 6.2 A4.1 4.1 0 1 1 8.2 2.4" fill="none" stroke="#343a6b" stroke-width="1.6"/><path d="M6.2 0.6 L10.6 0.6 L10.6 5 Z" fill="#343a6b"/></svg><svg style="left:681px;top:562px" width="7" height="4" viewBox="0 0 7 4"><path d="M0.4 0.2H6.6L3.5 3.6Z" fill="#343a6b"/></svg><svg style="left:705px;top:562px" width="11" height="3" viewBox="0 0 11 3"><circle cx="1.4" cy="1.4" r="1.3" fill="#343a6b"/><circle cx="5.5" cy="1.4" r="1.3" fill="#343a6b"/><circle cx="9.6" cy="1.4" r="1.3" fill="#343a6b"/></svg><svg style="left:734px;top:556px" width="13" height="13" viewBox="0 0 13 13"><circle cx="6.5" cy="6.5" r="5.7" fill="none" stroke="#343a6b" stroke-width="1.4"/><rect x="5.8" y="5.3" width="1.4" height="4.2" fill="#343a6b"/><rect x="5.75" y="2.8" width="1.5" height="1.5" fill="#343a6b"/></svg><div style="left:654px;top:589px;width:93px;height:41px;border:1px solid #e2e2e2;border-radius:4px;background:#fff"></div><div style="left:654px;top:589px;width:45px;height:41px;background:#4d5587;border-radius:4px 0 0 4px"></div><svg style="left:666px;top:599px" width="22" height="22" viewBox="0 0 22 22"><circle cx="11" cy="11" r="9.8" fill="none" stroke="#fff" stroke-width="2"/><path d="M11 1.2V20.8M11 11H20.8" stroke="#fff" stroke-width="2"/></svg><svg style="left:714px;top:600px" width="18" height="19" viewBox="0 0 18 19"><rect x="1" y="6.5" width="3.6" height="11.5" fill="#222"/><rect x="7.3" y="1" width="3.6" height="17" fill="#222"/><rect x="13.5" y="10.5" width="3.6" height="7.5" fill="#222"/></svg><svg style="left:0;top:0" width="760" height="645" viewBox="0 0 760 645"><defs><clipPath id="pc"><circle cx="295" cy="771.3" r="130.7"/></clipPath></defs><g clip-path="url(#pc)"><rect x="150" y="630" width="300" height="20" fill="#2a3275"/><path d="M295 771.3 L150 640 L265 630Z" fill="#f38161"/><rect x="293.8" y="630" width="1.6" height="20" fill="#fff"/></g></svg><div class="p" style="left:765px;top:87px;width:697px;height:234px"></div><div class="t" style="left:776.80px;top:94.00px;font-size:13px;letter-spacing:0.383px;color:#36406f">Pending Actions Monitor</div><div style="left:766px;top:118px;width:695px;height:1px;background:#d8e2f4"></div><svg style="left:1259.7px;top:96px" width="11" height="11" viewBox="0 0 11 11"><circle cx="4.3" cy="4.3" r="3.4" fill="none" stroke="#343a6b" stroke-width="1.6"/><path d="M6.8 6.8 L10.2 10.2" stroke="#343a6b" stroke-width="1.8"/></svg><svg style="left:1289.3px;top:97px" width="12" height="10" viewBox="0 0 12 10"><path d="M0.3 1H11.7M2.3 4.6H9.7M4.8 8.2H7.2" stroke="#343a6b" stroke-width="1.1"/></svg><svg style="left:1319.6px;top:98px" width="12" height="9" viewBox="0 0 12 9"><rect x="0.7" y="0.7" width="10.6" height="7.6" fill="none" stroke="#343a6b" stroke-width="1.4"/><path d="M4.2 0.7V8.3M7.8 0.7V8.3" stroke="#343a6b" stroke-width="1.3"/></svg><svg style="left:1349.6px;top:96px" width="11" height="11" viewBox="0 0 11 11"><path d="M9.3 6.2 A4.1 4.1 0 1 1 8.2 2.4" fill="none" stroke="#343a6b" stroke-width="1.6"/><path d="M6.2 0.6 L10.6 0.6 L10.6 5 Z" fill="#343a6b"/></svg><svg style="left:1378.4px;top:101px" width="7" height="4" viewBox="0 0 7 4"><path d="M0.4 0.2H6.6L3.5 3.6Z" fill="#343a6b"/></svg><svg style="left:1403.6px;top:101px" width="11" height="3" viewBox="0 0 11 3"><circle cx="1.4" cy="1.4" r="1.3" fill="#343a6b"/><circle cx="5.5" cy="1.4" r="1.3" fill="#343a6b"/><circle cx="9.6" cy="1.4" r="1.3" fill="#343a6b"/></svg><svg style="left:1431.7px;top:95px" width="13" height="13" viewBox="0 0 13 13"><circle cx="6.5" cy="6.5" r="5.7" fill="none" stroke="#343a6b" stroke-width="1.4"/><rect x="5.8" y="5.3" width="1.4" height="4.2" fill="#343a6b"/><rect x="5.75" y="2.8" width="1.5" height="1.5" fill="#343a6b"/></svg><div class="t nv" style="left:787.00px;top:124.37px;font-size:12.2px;letter-spacing:0.271px;">Status Code</div><div class="t nv" style="left:887.00px;top:124.37px;font-size:12.2px;letter-spacing:0.682px;">Description</div><div class="t nv" style="left:1277.80px;top:124.37px;font-size:12.2px;letter-spacing:0.272px;">No. of Payments</div><div class="rl" style="left:766px;top:143.30px;width:695px"></div><div class="t dk" style="left:787.50px;top:148.14px;font-size:12.3px;letter-spacing:-0.145px;">602</div><div class="t dk" style="left:887.50px;top:148.14px;font-size:12.3px;letter-spacing:0.266px;">Processing - Filtering Subflow - Screening STP payment</div><div class="t dk" style="left:1284px;width:100px;text-align:right;top:147.30px">6</div><svg style="left:1434px;top:146.5px" width="16" height="17.4" viewBox="0 0 16 17.4"><rect x="0" y="1" width="16" height="15.4" fill="#1f6fd1"/><rect x="2" y="2.6" width="12" height="12.4" fill="#fff"/><path d="M3.1 5.4H12.9M3.1 8.8H12.9M3.1 12.4H12.9" stroke="#1f6fd1" stroke-width="1.7"/><rect x="0.3" y="0" width="1.6" height="1.2" fill="#1f6fd1"/><rect x="3.0" y="0" width="1.6" height="1.2" fill="#1f6fd1"/><rect x="5.7" y="0" width="1.6" height="1.2" fill="#1f6fd1"/><rect x="8.400000000000002" y="0" width="1.6" height="1.2" fill="#1f6fd1"/><rect x="11.100000000000001" y="0" width="1.6" height="1.2" fill="#1f6fd1"/><rect x="13.8" y="0" width="1.6" height="1.2" fill="#1f6fd1"/><rect x="0.3" y="16.2" width="1.6" height="1.2" fill="#1f6fd1"/><rect x="3.0" y="16.2" width="1.6" height="1.2" fill="#1f6fd1"/><rect x="5.7" y="16.2" width="1.6" height="1.2" fill="#1f6fd1"/><rect x="8.400000000000002" y="16.2" width="1.6" height="1.2" fill="#1f6fd1"/><rect x="11.100000000000001" y="16.2" width="1.6" height="1.2" fill="#1f6fd1"/><rect x="13.8" y="16.2" width="1.6" height="1.2" fill="#1f6fd1"/></svg><div class="rl" style="left:766px;top:166.75px;width:695px"></div><div class="t dk" style="left:787.50px;top:171.59px;font-size:12.3px;letter-spacing:-0.145px;">625</div><div class="t dk" style="left:888.50px;top:171.59px;font-size:12.3px;letter-spacing:0.249px;">Waiting - Risk Filter Authorisation Queue</div><div class="t dk" style="left:1284px;width:100px;text-align:right;top:170.75px">1</div><svg style="left:1434px;top:169.95px" width="16" height="17.4" viewBox="0 0 16 17.4"><rect x="0" y="1" width="16" height="15.4" fill="#1f6fd1"/><rect x="2" y="2.6" width="12" height="12.4" fill="#fff"/><path d="M3.1 5.4H12.9M3.1 8.8H12.9M3.1 12.4H12.9" stroke="#1f6fd1" stroke-width="1.7"/><rect x="0.3" y="0" width="1.6" height="1.2" fill="#1f6fd1"/><rect x="3.0" y="0" width="1.6" height="1.2" fill="#1f6fd1"/><rect x="5.7" y="0" width="1.6" height="1.2" fill="#1f6fd1"/><rect x="8.400000000000002" y="0" width="1.6" height="1.2" fill="#1f6fd1"/><rect x="11.100000000000001" y="0" width="1.6" height="1.2" fill="#1f6fd1"/><rect x="13.8" y="0" width="1.6" height="1.2" fill="#1f6fd1"/><rect x="0.3" y="16.2" width="1.6" height="1.2" fill="#1f6fd1"/><rect x="3.0" y="16.2" width="1.6" height="1.2" fill="#1f6fd1"/><rect x="5.7" y="16.2" width="1.6" height="1.2" fill="#1f6fd1"/><rect x="8.400000000000002" y="16.2" width="1.6" height="1.2" fill="#1f6fd1"/><rect x="11.100000000000001" y="16.2" width="1.6" height="1.2" fill="#1f6fd1"/><rect x="13.8" y="16.2" width="1.6" height="1.2" fill="#1f6fd1"/></svg><div class="rl" style="left:766px;top:190.20px;width:695px"></div><div class="t dk" style="left:787.50px;top:195.04px;font-size:12.3px;letter-spacing:-0.320px;">49</div><div class="t dk" style="left:888.50px;top:195.04px;font-size:12.3px;letter-spacing:0.309px;">Waiting - Balance Check DDA approval</div><div class="t dk" style="left:1284px;width:100px;text-align:right;top:194.20px">5</div><svg style="left:1434px;top:193.4px" width="16" height="17.4" viewBox="0 0 16 17.4"><rect x="0" y="1" width="16" height="15.4" fill="#1f6fd1"/><rect x="2" y="2.6" width="12" height="12.4" fill="#fff"/><path d="M3.1 5.4H12.9M3.1 8.8H12.9M3.1 12.4H12.9" stroke="#1f6fd1" stroke-width="1.7"/><rect x="0.3" y="0" width="1.6" height="1.2" fill="#1f6fd1"/><rect x="3.0" y="0" width="1.6" height="1.2" fill="#1f6fd1"/><rect x="5.7" y="0" width="1.6" height="1.2" fill="#1f6fd1"/><rect x="8.400000000000002" y="0" width="1.6" height="1.2" fill="#1f6fd1"/><rect x="11.100000000000001" y="0" width="1.6" height="1.2" fill="#1f6fd1"/><rect x="13.8" y="0" width="1.6" height="1.2" fill="#1f6fd1"/><rect x="0.3" y="16.2" width="1.6" height="1.2" fill="#1f6fd1"/><rect x="3.0" y="16.2" width="1.6" height="1.2" fill="#1f6fd1"/><rect x="5.7" y="16.2" width="1.6" height="1.2" fill="#1f6fd1"/><rect x="8.400000000000002" y="16.2" width="1.6" height="1.2" fill="#1f6fd1"/><rect x="11.100000000000001" y="16.2" width="1.6" height="1.2" fill="#1f6fd1"/><rect x="13.8" y="16.2" width="1.6" height="1.2" fill="#1f6fd1"/></svg><div class="rl" style="left:766px;top:213.65px;width:695px"></div><div class="t dk" style="left:787.50px;top:218.49px;font-size:12.3px;letter-spacing:-0.145px;">645</div><div class="t dk" style="left:888.50px;top:218.49px;font-size:12.3px;letter-spacing:0.274px;">Waiting - Rate Request Queue</div><div class="t dk" style="left:1284px;width:100px;text-align:right;top:217.65px">1</div><svg style="left:1434px;top:216.85px" width="16" height="17.4" viewBox="0 0 16 17.4"><rect x="0" y="1" width="16" height="15.4" fill="#1f6fd1"/><rect x="2" y="2.6" width="12" height="12.4" fill="#fff"/><path d="M3.1 5.4H12.9M3.1 8.8H12.9M3.1 12.4H12.9" stroke="#1f6fd1" stroke-width="1.7"/><rect x="0.3" y="0" width="1.6" height="1.2" fill="#1f6fd1"/><rect x="3.0" y="0" width="1.6" height="1.2" fill="#1f6fd1"/><rect x="5.7" y="0" width="1.6" height="1.2" fill="#1f6fd1"/><rect x="8.400000000000002" y="0" width="1.6" height="1.2" fill="#1f6fd1"/><rect x="11.100000000000001" y="0" width="1.6" height="1.2" fill="#1f6fd1"/><rect x="13.8" y="0" width="1.6" height="1.2" fill="#1f6fd1"/><rect x="0.3" y="16.2" width="1.6" height="1.2" fill="#1f6fd1"/><rect x="3.0" y="16.2" width="1.6" height="1.2" fill="#1f6fd1"/><rect x="5.7" y="16.2" width="1.6" height="1.2" fill="#1f6fd1"/><rect x="8.400000000000002" y="16.2" width="1.6" height="1.2" fill="#1f6fd1"/><rect x="11.100000000000001" y="16.2" width="1.6" height="1.2" fill="#1f6fd1"/><rect x="13.8" y="16.2" width="1.6" height="1.2" fill="#1f6fd1"/></svg><div class="rl" style="left:766px;top:237.10px;width:695px"></div><div class="t dk" style="left:787.50px;top:241.94px;font-size:12.3px;letter-spacing:-0.145px;">706</div><div class="t dk" style="left:888.50px;top:241.94px;font-size:12.3px;letter-spacing:0.239px;">Waiting - Clearing/IP</div><div class="t dk" style="left:1284px;width:100px;text-align:right;top:241.10px">3</div><svg style="left:1434px;top:240.3px" width="16" height="17.4" viewBox="0 0 16 17.4"><rect x="0" y="1" width="16" height="15.4" fill="#1f6fd1"/><rect x="2" y="2.6" width="12" height="12.4" fill="#fff"/><path d="M3.1 5.4H12.9M3.1 8.8H12.9M3.1 12.4H12.9" stroke="#1f6fd1" stroke-width="1.7"/><rect x="0.3" y="0" width="1.6" height="1.2" fill="#1f6fd1"/><rect x="3.0" y="0" width="1.6" height="1.2" fill="#1f6fd1"/><rect x="5.7" y="0" width="1.6" height="1.2" fill="#1f6fd1"/><rect x="8.400000000000002" y="0" width="1.6" height="1.2" fill="#1f6fd1"/><rect x="11.100000000000001" y="0" width="1.6" height="1.2" fill="#1f6fd1"/><rect x="13.8" y="0" width="1.6" height="1.2" fill="#1f6fd1"/><rect x="0.3" y="16.2" width="1.6" height="1.2" fill="#1f6fd1"/><rect x="3.0" y="16.2" width="1.6" height="1.2" fill="#1f6fd1"/><rect x="5.7" y="16.2" width="1.6" height="1.2" fill="#1f6fd1"/><rect x="8.400000000000002" y="16.2" width="1.6" height="1.2" fill="#1f6fd1"/><rect x="11.100000000000001" y="16.2" width="1.6" height="1.2" fill="#1f6fd1"/><rect x="13.8" y="16.2" width="1.6" height="1.2" fill="#1f6fd1"/></svg><div class="rl" style="left:766px;top:260.55px;width:695px"></div><div class="t dk" style="left:787.50px;top:265.39px;font-size:12.3px;letter-spacing:-0.145px;">687</div><div class="t dk" style="left:888.50px;top:265.39px;font-size:12.3px;letter-spacing:0.268px;">Waiting - Cover message to be sent/Instant message sent</div><div class="t dk" style="left:1284px;width:100px;text-align:right;top:264.55px">16</div><svg style="left:1434px;top:263.75px" width="16" height="17.4" viewBox="0 0 16 17.4"><rect x="0" y="1" width="16" height="15.4" fill="#1f6fd1"/><rect x="2" y="2.6" width="12" height="12.4" fill="#fff"/><path d="M3.1 5.4H12.9M3.1 8.8H12.9M3.1 12.4H12.9" stroke="#1f6fd1" stroke-width="1.7"/><rect x="0.3" y="0" width="1.6" height="1.2" fill="#1f6fd1"/><rect x="3.0" y="0" width="1.6" height="1.2" fill="#1f6fd1"/><rect x="5.7" y="0" width="1.6" height="1.2" fill="#1f6fd1"/><rect x="8.400000000000002" y="0" width="1.6" height="1.2" fill="#1f6fd1"/><rect x="11.100000000000001" y="0" width="1.6" height="1.2" fill="#1f6fd1"/><rect x="13.8" y="0" width="1.6" height="1.2" fill="#1f6fd1"/><rect x="0.3" y="16.2" width="1.6" height="1.2" fill="#1f6fd1"/><rect x="3.0" y="16.2" width="1.6" height="1.2" fill="#1f6fd1"/><rect x="5.7" y="16.2" width="1.6" height="1.2" fill="#1f6fd1"/><rect x="8.400000000000002" y="16.2" width="1.6" height="1.2" fill="#1f6fd1"/><rect x="11.100000000000001" y="16.2" width="1.6" height="1.2" fill="#1f6fd1"/><rect x="13.8" y="16.2" width="1.6" height="1.2" fill="#1f6fd1"/></svg><div class="rl" style="left:766px;top:284.00px;width:695px"></div><div class="t" style="left:1296px;top:294px;color:#454545">Results 1 - 6 of 6</div><div class="p" style="left:765px;top:331px;width:697px;height:341px"></div><div style="left:766px;top:362px;width:695px;height:1px;background:#d8e2f4"></div><svg style="left:1259.7px;top:340px" width="11" height="11" viewBox="0 0 11 11"><circle cx="4.3" cy="4.3" r="3.4" fill="none" stroke="#343a6b" stroke-width="1.6"/><path d="M6.8 6.8 L10.2 10.2" stroke="#343a6b" stroke-width="1.8"/></svg><svg style="left:1289.3px;top:341px" width="12" height="10" viewBox="0 0 12 10"><path d="M0.3 1H11.7M2.3 4.6H9.7M4.8 8.2H7.2" stroke="#343a6b" stroke-width="1.1"/></svg><svg style="left:1319.6px;top:342px" width="12" height="9" viewBox="0 0 12 9"><rect x="0.7" y="0.7" width="10.6" height="7.6" fill="none" stroke="#343a6b" stroke-width="1.4"/><path d="M4.2 0.7V8.3M7.8 0.7V8.3" stroke="#343a6b" stroke-width="1.3"/></svg><svg style="left:1349.6px;top:340px" width="11" height="11" viewBox="0 0 11 11"><path d="M9.3 6.2 A4.1 4.1 0 1 1 8.2 2.4" fill="none" stroke="#343a6b" stroke-width="1.6"/><path d="M6.2 0.6 L10.6 0.6 L10.6 5 Z" fill="#343a6b"/></svg><svg style="left:1378.4px;top:345px" width="7" height="4" viewBox="0 0 7 4"><path d="M0.4 0.2H6.6L3.5 3.6Z" fill="#343a6b"/></svg><svg style="left:1403.6px;top:345px" width="11" height="3" viewBox="0 0 11 3"><circle cx="1.4" cy="1.4" r="1.3" fill="#343a6b"/><circle cx="5.5" cy="1.4" r="1.3" fill="#343a6b"/><circle cx="9.6" cy="1.4" r="1.3" fill="#343a6b"/></svg><svg style="left:1431.7px;top:339px" width="13" height="13" viewBox="0 0 13 13"><circle cx="6.5" cy="6.5" r="5.7" fill="none" stroke="#343a6b" stroke-width="1.4"/><rect x="5.8" y="5.3" width="1.4" height="4.2" fill="#343a6b"/><rect x="5.75" y="2.8" width="1.5" height="1.5" fill="#343a6b"/></svg><svg style="left:0;top:0" width="1487" height="645" viewBox="0 0 1487 645"><rect x="834.10" y="435.4" width="1" height="220" fill="#c4c4c4"/><rect x="921.67" y="435.4" width="1" height="220" fill="#e0e0e0"/><rect x="1009.24" y="435.4" width="1" height="220" fill="#e0e0e0"/><rect x="1096.81" y="435.4" width="1" height="220" fill="#e0e0e0"/><rect x="1184.38" y="435.4" width="1" height="220" fill="#e0e0e0"/><rect x="1271.95" y="435.4" width="1" height="220" fill="#e0e0e0"/><rect x="1359.52" y="435.4" width="1" height="220" fill="#e0e0e0"/><rect x="827" y="435.40" width="533" height="1" fill="#e0e0e0"/><text x="823" y="440.20" text-anchor="end" font-family="Liberation Sans" font-size="12.5" fill="#666">16</text><rect x="827" y="476.60" width="533" height="1" fill="#e0e0e0"/><text x="823" y="481.40" text-anchor="end" font-family="Liberation Sans" font-size="12.5" fill="#666">14</text><rect x="827" y="517.80" width="533" height="1" fill="#e0e0e0"/><text x="823" y="522.60" text-anchor="end" font-family="Liberation Sans" font-size="12.5" fill="#666">12</text><rect x="827" y="559.00" width="533" height="1" fill="#e0e0e0"/><text x="823" y="563.80" text-anchor="end" font-family="Liberation Sans" font-size="12.5" fill="#666">10</text><rect x="827" y="600.20" width="533" height="1" fill="#e0e0e0"/><text x="823" y="605.00" text-anchor="end" font-family="Liberation Sans" font-size="12.5" fill="#666">8</text><rect x="827" y="641.40" width="533" height="1" fill="#e0e0e0"/><text x="823" y="646.20" text-anchor="end" font-family="Liberation Sans" font-size="12.5" fill="#666">6</text><rect x="847.30" y="641.90" width="62.6" height="3.10" fill="#2a3275"/><rect x="934.87" y="744.90" width="62.6" height="0.00" fill="#cccc00"/><rect x="1022.44" y="662.50" width="62.6" height="0.00" fill="#f38161"/><rect x="1110.01" y="744.90" width="62.6" height="0.00" fill="#c8d8f0"/><rect x="1197.58" y="703.70" width="62.6" height="0.00" fill="#8b939e"/><rect x="1285.15" y="435.90" width="62.6" height="209.10" fill="#821010"/><rect x="1286.75" y="437.50" width="59.4" height="209.10" fill="none" stroke="rgba(255,255,255,0.13)" stroke-width="1"/><rect x="1369.5" y="409.20" width="43.8" height="14.7" fill="#2a3275"/><text x="1418.5" y="421.00" font-family="Liberation Sans" font-size="12.5" fill="#666">6</text><rect x="1369.5" y="432.28" width="43.8" height="14.7" fill="#cccc00"/><text x="1418.5" y="444.08" font-family="Liberation Sans" font-size="12.5" fill="#666">1</text><rect x="1369.5" y="455.36" width="43.8" height="14.7" fill="#f38161"/><text x="1418.5" y="467.16" font-family="Liberation Sans" font-size="12.5" fill="#666">5</text><rect x="1369.5" y="478.44" width="43.8" height="14.7" fill="#c8d8f0"/><text x="1418.5" y="490.24" font-family="Liberation Sans" font-size="12.5" fill="#666">1</text><rect x="1369.5" y="501.52" width="43.8" height="14.7" fill="#8b939e"/><text x="1418.5" y="513.32" font-family="Liberation Sans" font-size="12.5" fill="#666">3</text><rect x="1369.5" y="524.60" width="43.8" height="14.7" fill="#821010"/><text x="1418.5" y="536.40" font-family="Liberation Sans" font-size="12.5" fill="#666">16</text><text x="1113" y="421.5" text-anchor="middle" font-family="Liberation Sans" font-size="13" font-weight="bold" fill="#666" letter-spacing="-0.18">Pending Actions Monitor</text><text transform="translate(798.5 645) rotate(-90)" x="-3" y="0" font-family="Liberation Sans" font-size="12.5" fill="#666">No.of Payments</text></svg><div style="left:1450px;top:632px;width:29px;height:14px;background:rgba(150,150,150,0.52);border-radius:5px 5px 0 0"></div><div style="left:1459px;top:635.5px;width:12px;height:1.6px;background:#fff"></div><div style="left:1459px;top:639.3px;width:12px;height:1.6px;background:#fff"></div><div style="left:0;top:0;width:42px;height:645px;background:#2c3161"></div><div style="left:42px;top:0;width:7px;height:645px;background:linear-gradient(to right,#a1a4aa 0px,#c6cbd4 2px,#dde3ee 4px,#e9f0fb 7px)"></div><div style="left:52px;top:0;width:1px;height:645px;background:#e4ebf7"></div><div style="left:53px;top:42px;width:1px;height:603px;background:#dbe2f0"></div><div style="left:6px;top:10.7px;width:30px;height:30px;border-radius:50%;background:#fff"></div><svg style="left:14px;top:15px" width="14" height="20" viewBox="0 0 14 20"><path d="M6 1.3V13.8Q6 17.6 9.8 17.6H12.2" fill="none" stroke="#0b4a8a" stroke-width="3.5"/><path d="M1 6.3H12" stroke="#0b4a8a" stroke-width="2.3"/></svg><svg style="left:14px;top:70px" width="14" height="10" viewBox="0 0 14 10"><path d="M1 2H13M1 5H13M1 8.4H13" stroke="#fff" stroke-width="1.8"/></svg><svg style="left:13px;top:119px" width="16" height="15" viewBox="0 0 16 15"><path d="M3.82 6.44 A5.6 5.6 0 1 1 5.41 11.63" fill="none" stroke="#fff" stroke-width="1.8"/><path d="M0.9 6.6 L6.6 6.6 L3.75 10.4Z" fill="#fff"/><path d="M9.3 4.3V8L11.6 9.9" fill="none" stroke="#fff" stroke-width="1.5"/></svg><svg style="left:14px;top:170px" width="14" height="13" viewBox="0 0 14 13"><path d="M7 0.3L8.7 4.6L13.4 4.8L9.7 7.8L11 12.6L7 9.9L3 12.6L4.3 7.8L0.6 4.8L5.3 4.6Z" fill="#fff"/></svg><svg style="left:15px;top:222.5px" width="12" height="11" viewBox="0 0 12 11"><rect x="0.0" y="0.0" width="3.3" height="2.8" fill="#fff"/><rect x="0.0" y="3.6" width="3.3" height="2.8" fill="#fff"/><rect x="0.0" y="7.2" width="3.3" height="2.8" fill="#fff"/><rect x="4.1" y="0.0" width="3.3" height="2.8" fill="#fff"/><rect x="4.1" y="3.6" width="3.3" height="2.8" fill="#fff"/><rect x="4.1" y="7.2" width="3.3" height="2.8" fill="#fff"/><rect x="8.2" y="0.0" width="3.3" height="2.8" fill="#fff"/><rect x="8.2" y="3.6" width="3.3" height="2.8" fill="#fff"/><rect x="8.2" y="7.2" width="3.3" height="2.8" fill="#fff"/></svg><svg style="left:0;top:0" width="42" height="645" viewBox="0 0 42 645"><path d="M19.27 531.64 L19.62 529.97 L22.58 529.97 L22.93 531.64 L24.31 532.44 L25.93 531.90 L27.41 534.47 L26.14 535.60 L26.14 537.20 L27.41 538.33 L25.93 540.90 L24.31 540.36 L22.93 541.16 L22.58 542.83 L19.62 542.83 L19.27 541.16 L17.89 540.36 L16.27 540.90 L14.79 538.33 L16.06 537.20 L16.06 535.60 L14.79 534.47 L16.27 531.90 L17.89 532.44Z" fill="#fff"/><circle cx="21.1" cy="536.4" r="3.1" fill="#2c3161"/><circle cx="21.1" cy="536.4" r="1.9" fill="none" stroke="#fff" stroke-width="1.1"/><circle cx="19.6" cy="576.6" r="2.4" fill="none" stroke="#fff" stroke-width="1.5"/><path d="M15.1 584.1 V583.2 Q15.1 580.6 19.6 580.6 Q20.6 580.6 21.3 580.8 M15.1 584.1 H21" fill="none" stroke="#fff" stroke-width="1.5" stroke-linejoin="round"/><path d="M23.39 579.00 L23.61 578.09 L25.19 578.09 L25.41 579.00 L26.06 579.37 L26.96 579.11 L27.75 580.48 L27.07 581.12 L27.07 581.88 L27.75 582.52 L26.96 583.89 L26.06 583.63 L25.41 584.00 L25.19 584.91 L23.61 584.91 L23.39 584.00 L22.74 583.63 L21.84 583.89 L21.05 582.52 L21.73 581.88 L21.73 581.12 L21.05 580.48 L21.84 579.11 L22.74 579.37Z" fill="#fff"/><circle cx="24.4" cy="581.5" r="1.1" fill="#2c3161"/></svg><svg style="left:14px;top:615px" width="14" height="13" viewBox="0 0 14 13"><path d="M7.5 1.7H2.3Q1.6 1.7 1.6 2.4V11.4Q1.6 12.1 2.3 12.1H7.5" fill="none" stroke="#fff" stroke-width="2"/><path d="M4.7 6.6H11.6M9.2 4.1L11.8 6.6L9.2 9.1" fill="none" stroke="#fff" stroke-width="1.7"/></svg><div style="left:0;top:645px;width:1479px;height:40px;background:#fff;border-top:1px solid #c6c6c6"></div><div style="left:10px;top:650px;width:274px;height:34px;border:1px solid #9c9c9c;border-radius:4px;background:#fff"></div><svg style="left:293px;top:659px" width="14" height="13" viewBox="0 0 14 13"><path d="M1.6 1.5L12.4 6.6L1.6 5.4Z M1.6 7.8L12.4 6.6L1.6 11.7Z" fill="none" stroke="#2a73d0" stroke-width="1.5" stroke-linejoin="round"/></svg><div style="left:326px;top:646px;width:134px;height:39px;background:#d5ebf6"></div><div style="left:344px;top:659px;font-size:13px;line-height:15px;color:#555">Welcome to ...</div><svg style="left:441px;top:663px" width="9" height="9" viewBox="0 0 9 9"><path d="M0.6 0.6L8.4 8.4M8.4 0.6L0.6 8.4" stroke="#2b2f5e" stroke-width="1.15"/></svg><svg style="left:1451px;top:662.5px" width="17" height="13" viewBox="0 0 17 13"><path d="M5 1.3H15.2V11.3H5L1 6.3Z" fill="none" stroke="#2a73d0" stroke-width="1.5" stroke-linejoin="round"/><path d="M6.8 3.8L11.6 8.8M11.6 3.8L6.8 8.8" stroke="#2a73d0" stroke-width="1.3"/></svg></body></html>
